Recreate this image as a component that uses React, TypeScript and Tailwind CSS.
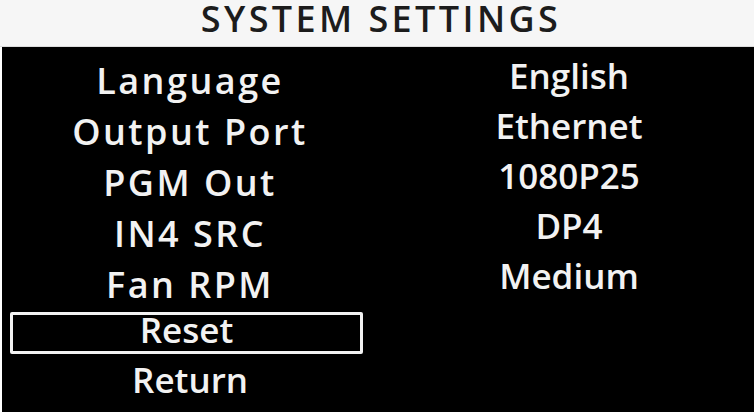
export default function App() {
  const labels = ["Language", "Output Port", "PGM Out", "IN4 SRC", "Fan RPM"];
  const values = ["English", "Ethernet", "1080P25", "DP4", "Medium"];

  return (
    <div className="w-[754px] h-[418px] bg-white flex flex-col font-['Open_Sans',sans-serif] font-semibold overflow-hidden">
      <div className="h-[47px] pl-[8px] bg-[#f6f6f6] border-b border-[#dcdcdc] text-center text-[36px] leading-[38px] tracking-[3.4px] text-[#1c1c1c]">
        SYSTEM SETTINGS
      </div>
      <div className="ml-[2px] h-[365px] bg-black grid grid-cols-2 text-[#f2f2f2]">
        <div className="flex flex-col items-center pt-[8px]">
          {labels.map((l) => (
            <div key={l} className="text-[36px] leading-[51px] tracking-[2.5px]">
              {l}
            </div>
          ))}
          <div className="self-start ml-[8px] mt-[2px] w-[353px] h-[42px] border-[3px] border-[#f2f2f2] rounded-[2px] text-center text-[35px] leading-[30px]">
            Reset
          </div>
          <div className="text-[35px] leading-[51px]">Return</div>
        </div>
        <div className="flex flex-col items-center pt-[4px] pl-[6px]">
          {values.map((v) => (
            <div key={v} className="text-[35px] leading-[50px]">
              {v}
            </div>
          ))}
        </div>
      </div>
    </div>
  );
}
